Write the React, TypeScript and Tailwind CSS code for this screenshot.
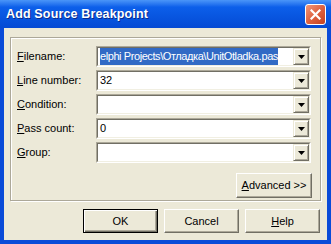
import React from 'react';

const font = { fontFamily: '"Liberation Sans", Arial, sans-serif' };

// classic win32 dropdown arrow button
function DropButton() {
  return (
    <div className="flex h-[17px] w-[16px] shrink-0 items-center justify-center border border-t-[#ece9d8] border-l-[#ece9d8] border-b-[#716f64] border-r-[#716f64] bg-[#ece9d8] shadow-[inset_1px_1px_0_#fff,inset_-1px_-1px_0_#aca899]">
      <svg width="7" height="4" viewBox="0 0 7 4">
        <path d="M0 0h7L3.5 4z" fill="#000" />
      </svg>
    </div>
  );
}

function Combo({ children }: { children?: React.ReactNode }) {
  return (
    <div className="flex h-[21px] w-[215px] border border-t-[#aca899] border-l-[#aca899] border-b-white border-r-white">
      <div className="flex flex-1 items-center overflow-hidden border border-t-[#716f64] border-l-[#716f64] border-b-[#f1efe2] border-r-[#f1efe2] bg-white">
        <div className="flex h-full flex-1 items-center overflow-hidden whitespace-nowrap pl-[2px] text-[11px] text-black">
          {children}
        </div>
        <DropButton />
      </div>
    </div>
  );
}

function Label({ k, rest }: { k: string; rest: string }) {
  return (
    <span className="w-[79px] text-[11px] text-black">
      <span className="underline underline-offset-[1px]">{k}</span>
      {rest}
    </span>
  );
}

function Button({ children, isDefault }: { children: React.ReactNode; isDefault?: boolean }) {
  return (
    <div
      className={`flex h-[24px] w-[75px] items-center justify-center bg-[#ece9d8] text-[11px] text-black ${
        isDefault
          ? 'border border-black shadow-[inset_1px_1px_0_#fff,inset_-1px_-1px_0_#716f64,inset_-2px_-2px_0_#aca899]'
          : 'border border-t-white border-l-white border-b-[#716f64] border-r-[#716f64] shadow-[inset_-1px_-1px_0_#aca899]'
      }`}
    >
      {children}
    </div>
  );
}

const rows = [
  { k: 'F', rest: 'ilename:' },
  { k: 'L', rest: 'ine number:' },
  { k: 'C', rest: 'ondition:' },
  { k: 'P', rest: 'ass count:' },
  { k: 'G', rest: 'roup:' },
];

export default function App() {
  return (
    <div className="flex h-[244px] w-[331px] flex-col" style={font}>
      {/* title bar */}
      <div className="flex h-[28px] shrink-0 items-center justify-between bg-gradient-to-b from-[#4a95f8] via-[#0c5fea] via-25% to-[#054ad4] pl-[6px] pr-[5px]">
        <span className="text-[12.5px] font-bold tracking-[0.15px] text-white [text-shadow:1px_1px_0_#0a2a8a]">
          Add Source Breakpoint
        </span>
        <div className="flex h-[21px] w-[21px] items-center justify-center rounded-[3px] border border-white bg-gradient-to-br from-[#f0977a] via-[#de6240] to-[#c4401f]">
          <svg width="11" height="11" viewBox="0 0 11 11">
            <path d="M1.5 1.5l8 8M9.5 1.5l-8 8" stroke="#fff" strokeWidth="2.2" strokeLinecap="square" />
          </svg>
        </div>
      </div>

      {/* body */}
      <div className="flex flex-1 flex-col border-x-4 border-b-4 border-[#0a4bd8] bg-[#ece9d8] px-[6px] pt-[9px]">
        <div className="flex h-[164px] flex-col border border-[#aca899] pl-[6px] pr-[8px] pt-[8px] shadow-[inset_1px_1px_0_#fff,1px_1px_0_#fff]">
          <div className="flex flex-col gap-[3px]">
            {rows.map((r, i) => (
              <div key={i} className="flex h-[21px] items-center">
                <Label k={r.k} rest={r.rest} />
                <Combo>
                  {i === 0 && (
                    <span className="bg-[#316ac5] tracking-[-0.42px] text-white">
                      elphi Projects\Отладка\UnitOtladka.pas
                    </span>
                  )}
                  {i === 1 && '32'}
                  {i === 3 && '0'}
                </Combo>
              </div>
            ))}
          </div>
          <div className="mt-[10px] flex justify-end">
            <div className="flex h-[25px] w-[76px] items-center justify-center border border-t-white border-l-white border-b-[#716f64] border-r-[#716f64] bg-[#ece9d8] text-[11px] text-black shadow-[inset_-1px_-1px_0_#aca899]">
              <span className="underline underline-offset-[1px]">A</span>dvanced &gt;&gt;
            </div>
          </div>
        </div>

        <div className="mt-[8px] flex justify-end gap-[6px] pr-[1px]">
          <Button isDefault>OK</Button>
          <Button>Cancel</Button>
          <Button>
            <span className="underline underline-offset-[1px]">H</span>elp
          </Button>
        </div>
      </div>
    </div>
  );
}
